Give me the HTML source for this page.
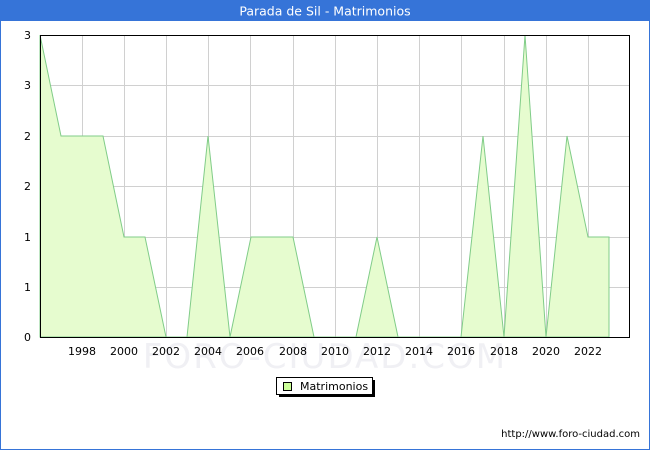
<!DOCTYPE html>
<html><head><meta charset="utf-8"><style>
body{margin:0;width:650px;height:450px;overflow:hidden;background:#fff;font-family:"DejaVu Sans","Liberation Sans",sans-serif}
</style></head><body>
<svg width="650" height="450" xmlns="http://www.w3.org/2000/svg" font-family="DejaVu Sans, Liberation Sans, sans-serif">
<rect x="0.5" y="0.5" width="649" height="449" fill="#fff" stroke="#3674d8"/>
<rect x="0" y="0" width="650" height="21" fill="#3674d8"/>
<text x="325" y="15.5" fill="#fff" font-size="12.5" text-anchor="middle">Parada de Sil - Matrimonios</text>
<g stroke="#d0d0d0" stroke-width="1">
<line x1="40" y1="85.5" x2="630" y2="85.5"/><line x1="40" y1="136.5" x2="630" y2="136.5"/><line x1="40" y1="186.5" x2="630" y2="186.5"/><line x1="40" y1="237.5" x2="630" y2="237.5"/><line x1="40" y1="287.5" x2="630" y2="287.5"/>
<line x1="82.5" y1="35" x2="82.5" y2="337"/><line x1="124.5" y1="35" x2="124.5" y2="337"/><line x1="166.5" y1="35" x2="166.5" y2="337"/><line x1="208.5" y1="35" x2="208.5" y2="337"/><line x1="250.5" y1="35" x2="250.5" y2="337"/><line x1="293.5" y1="35" x2="293.5" y2="337"/><line x1="335.5" y1="35" x2="335.5" y2="337"/><line x1="377.5" y1="35" x2="377.5" y2="337"/><line x1="419.5" y1="35" x2="419.5" y2="337"/><line x1="461.5" y1="35" x2="461.5" y2="337"/><line x1="504.5" y1="35" x2="504.5" y2="337"/><line x1="546.5" y1="35" x2="546.5" y2="337"/><line x1="588.5" y1="35" x2="588.5" y2="337"/>
</g>
<text x="325" y="368" font-size="34" fill="#f0f0f4" text-anchor="middle" letter-spacing="2">FORO-CIUDAD.COM</text>
<polygon fill="#e6fccf" stroke="#80cc88" stroke-width="1" points="40,35 61,136 82,136 103,136 124,237 145,237 166,337 187,337 208,136 230,337 251,237 272,237 293,237 314,337 335,337 356,337 377,237 398,337 419,337 440,337 461,337 483,136 504,337 525,35 546,337 567,136 588,237 609,237 609,337 40,337"/>
<rect x="40.5" y="35.5" width="589" height="302" fill="none" stroke="#000"/>
<g font-size="11" fill="#000" text-anchor="end">
<text x="31" y="39">3</text><text x="31" y="89">3</text><text x="31" y="140">2</text><text x="31" y="190">2</text><text x="31" y="241">1</text><text x="31" y="291">1</text><text x="31" y="341">0</text>
</g>
<g font-size="11" fill="#000" text-anchor="middle">
<text x="82" y="355">1998</text><text x="124" y="355">2000</text><text x="166" y="355">2002</text><text x="208" y="355">2004</text><text x="250" y="355">2006</text><text x="293" y="355">2008</text><text x="335" y="355">2010</text><text x="377" y="355">2012</text><text x="419" y="355">2014</text><text x="461" y="355">2016</text><text x="504" y="355">2018</text><text x="546" y="355">2020</text><text x="588" y="355">2022</text>
</g>
<rect x="279" y="380" width="96" height="17" fill="#000"/>
<rect x="276.5" y="377.5" width="96" height="17" fill="#fff" stroke="#000"/>
<rect x="283.5" y="382.5" width="8" height="8" fill="#ccff99" stroke="#000"/>
<text x="300" y="390" font-size="11">Matrimonios</text>
<text x="640" y="437" font-size="10" text-anchor="end">http://www.foro-ciudad.com</text>
</svg>
</body></html>
